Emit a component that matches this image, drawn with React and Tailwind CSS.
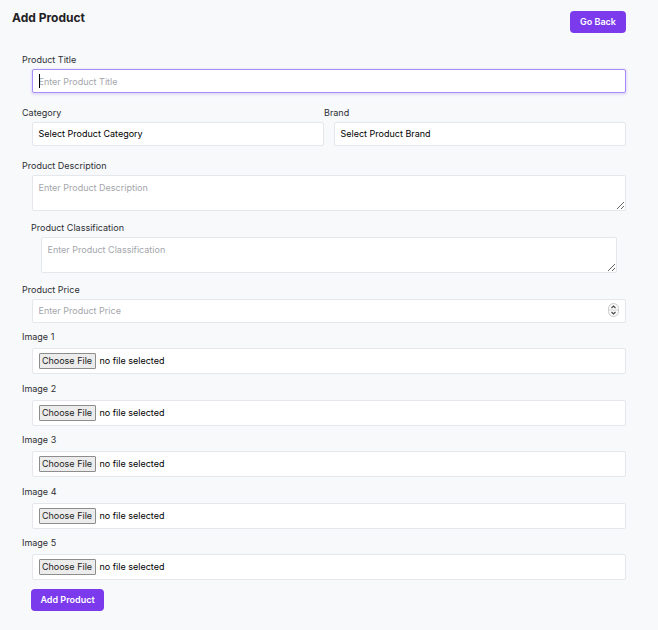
import React from 'react';

const font = { fontFamily: 'Inter, "Noto Sans", sans-serif' };

const Label = ({ children, className = '' }) => (
  <label className={`block text-[9px] leading-[12px] text-[#2d2f33] mb-[3px] ${className}`}>{children}</label>
);

const SpinIcon = () => (
  <svg width="11" height="14" viewBox="0 0 11 14" className="absolute right-[7px] top-[4px]">
    <rect x="0.5" y="0.5" width="10" height="13" rx="5" fill="#fafafa" stroke="#c9c9c9" />
    <line x1="1" y1="7" x2="10" y2="7" stroke="#d4d4d4" strokeWidth="1" />
    <path d="M3.5 5 L5.5 3 L7.5 5" fill="none" stroke="#444" strokeWidth="1.1" />
    <path d="M3.5 9 L5.5 11 L7.5 9" fill="none" stroke="#444" strokeWidth="1.1" />
  </svg>
);

const FileRow = ({ n }) => (
  <div className="mt-[8.5px]">
    <label className="block text-[9px] leading-[12px] text-[#2d2f33] mb-[5px]">Image {n}</label>
    <div className="ml-[9.5px] h-[26px] bg-white border border-[#e4e7eb] rounded-[2px] flex items-center px-[6px]">
      <span className="h-[16px] w-[57px] flex items-center justify-center bg-[#ececec] border border-[#8d8d8d] rounded-[1px] text-[9px] text-[#222]">
        Choose File
      </span>
      <span className="ml-[4px] text-[9px] text-black">no file selected</span>
    </div>
  </div>
);

export default function App() {
  return (
    <div className="min-h-screen w-full bg-[#f8f9fb] pb-10" style={font}>
      {/* Header */}
      <div className="flex items-start justify-between pl-3 pr-[32px]">
        <h1 className="mt-[10px] text-[12px] leading-[16px] font-bold text-[#1f2124]">Add Product</h1>
        <button className="mt-[11px] h-[22px] w-[56px] rounded-[4px] bg-[#7c3aed] text-white text-[9px] font-semibold">
          Go Back
        </button>
      </div>

      <form className="pl-[22px] pr-[32px] mt-[21px]">
        {/* Title */}
        <div>
          <Label>Product Title</Label>
          <div className="relative ml-[9.5px]">
            <input
              placeholder="Enter Product Title"
              className="block w-full h-[24px] bg-white border border-[#a78bfa] rounded-[2px] px-[6px] text-[9px] placeholder:text-[#a3a6ab] outline-none shadow-[0_1px_2px_1px_rgba(167,139,250,0.25)]"
            />
            <span className="absolute left-[7px] top-[5px] h-[14px] w-[1px] bg-black" />
          </div>
        </div>

        {/* Category / Brand */}
        <div className="grid grid-cols-2 mt-[13.5px]">
          <div>
            <Label>Category</Label>
            <div className="ml-[9.5px] h-[24px] bg-white border border-[#e4e7eb] rounded-[2px] px-[6px] flex items-center text-[9px] text-black">
              Select Product Category
            </div>
          </div>
          <div>
            <Label>Brand</Label>
            <div className="ml-[9.5px] h-[24px] bg-white border border-[#e4e7eb] rounded-[2px] px-[6px] flex items-center text-[9px] text-black">
              Select Product Brand
            </div>
          </div>
        </div>

        {/* Description */}
        <div className="mt-[14px]">
          <Label>Product Description</Label>
          <textarea
            placeholder="Enter Product Description"
            className="block ml-[9.5px] w-[calc(100%-9.5px)] h-[36px] bg-white border border-[#e4e7eb] rounded-[2px] px-[6px] py-[6px] text-[9px] leading-[12px] placeholder:text-[#a3a6ab] outline-none"
          />
        </div>

        {/* Classification */}
        <div className="mt-[11px] px-[9px]">
          <Label>Product Classification</Label>
          <textarea
            placeholder="Enter Product Classification"
            className="block ml-[9.5px] w-[calc(100%-9.5px)] h-[36px] bg-white border border-[#e4e7eb] rounded-[2px] px-[6px] py-[6px] text-[9px] leading-[12px] placeholder:text-[#a3a6ab] outline-none"
          />
        </div>

        {/* Price */}
        <div className="mt-[11px]">
          <Label>Product Price</Label>
          <div className="relative ml-[9.5px]">
            <input
              placeholder="Enter Product Price"
              className="block w-full h-[24px] bg-white border border-[#e4e7eb] rounded-[2px] px-[6px] text-[9px] placeholder:text-[#a3a6ab] outline-none"
            />
            <SpinIcon />
          </div>
        </div>

        {/* Images */}
        <div className="mt-[0.5px]">
          {[1, 2, 3, 4, 5].map((n) => (
            <FileRow key={n} n={n} />
          ))}
        </div>

        <button
          type="button"
          className="mt-[9px] ml-[9px] h-[22px] w-[73px] rounded-[4px] bg-[#7c3aed] text-white text-[9px] font-semibold"
        >
          Add Product
        </button>
      </form>
    </div>
  );
}
